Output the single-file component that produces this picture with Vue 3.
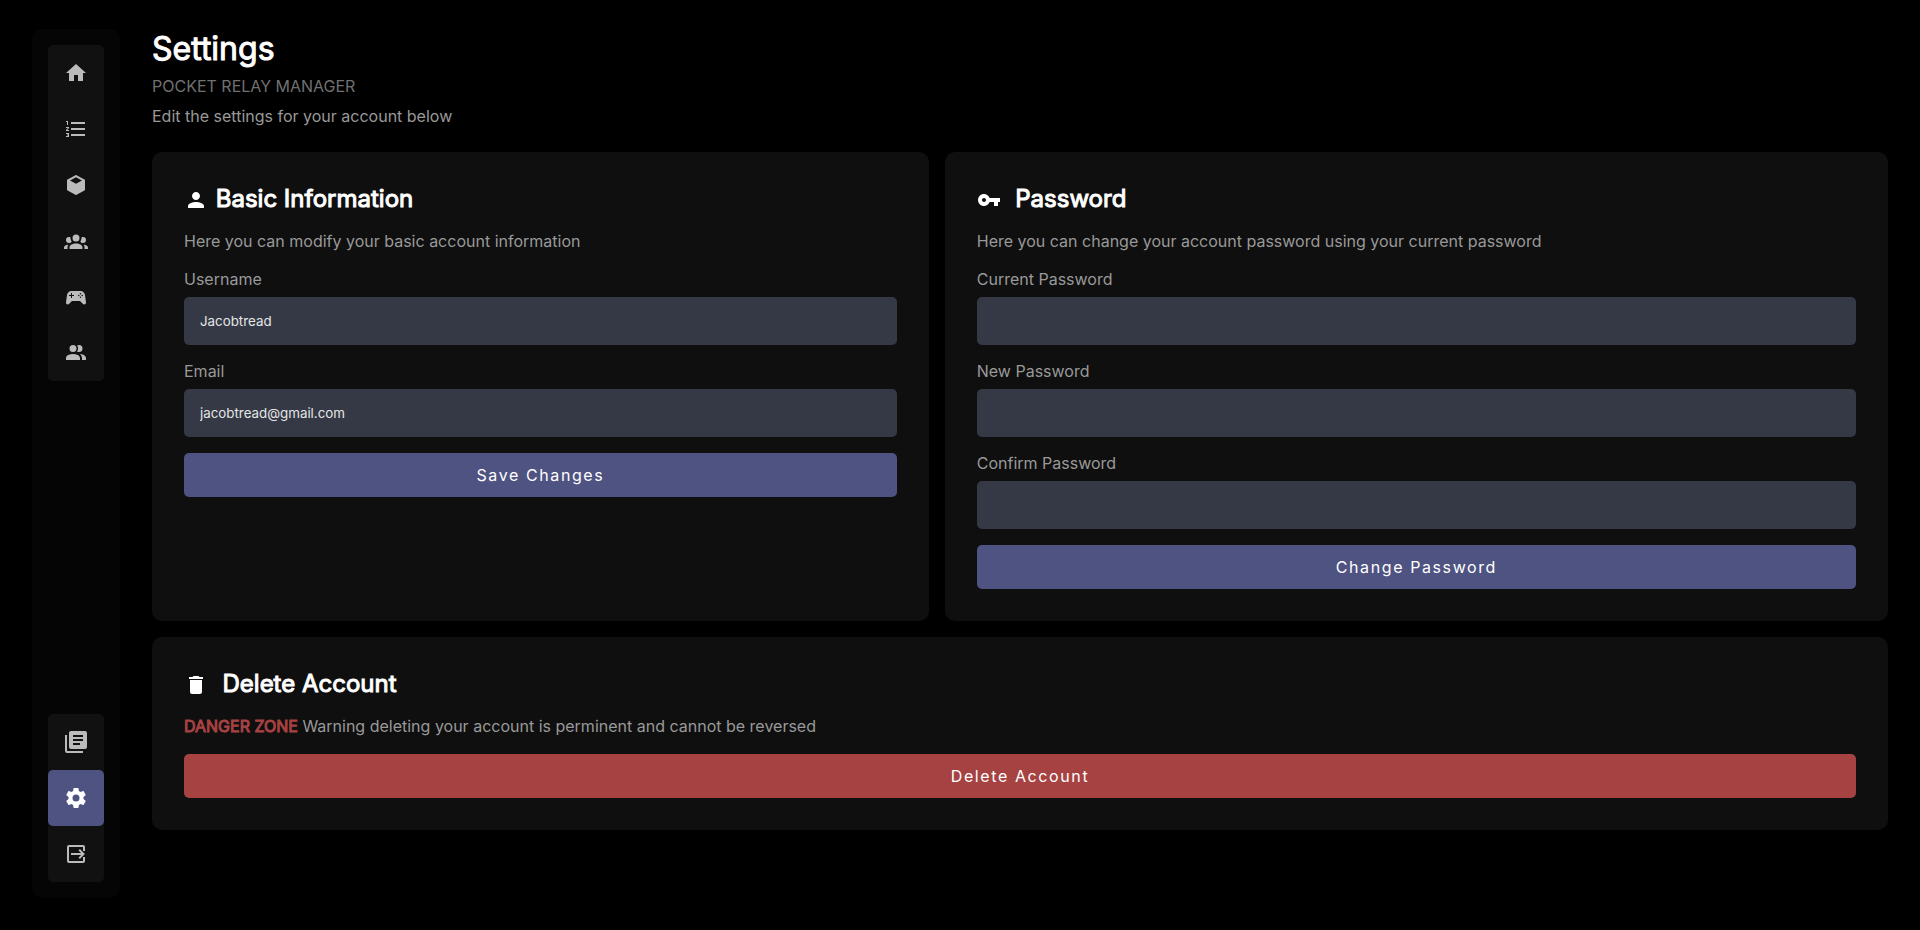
<script setup>
import { ref } from 'vue'

const mainLinks = [
  { label: 'Home', paths: ['M10 20v-6h4v6h5v-8h3L12 3 2 12h3v8z'] },
  { label: 'Leaderboards', paths: ['M2 17h2v.5H3v1h1v.5H2v1h3v-4H2v1zm1-9h1V4H2v1h1v3zm-1 3h1.800L2 13.100v.9h3v-1H3.200L5 10.900V10H2v1zm5-6v2h14V5H7zm0 14h14v-2H7v2zm0-6h14v-2H7v2z'] },
  { label: 'Inventory', paths: ['M21 16.5c0 .38-.21.71-.53.88l-7.900 4.440c-.16.12-.36.18-.57.18-.21 0-.41-.06-.57-.18l-7.900-4.440A.991.991 0 0 1 3 16.500v-9c0-.38.21-.71.53-.88l7.900-4.440c.16-.12.36-.18.57-.18.21 0 .41.06.57.18l7.900 4.440c.32.17.53.5.53.88v9M12 4.150 6.040 7.500 12 10.850l5.960-3.350L12 4.150z'] },
  { label: 'Players', paths: ['M12 5.5A3.5 3.5 0 0 1 15.5 9 3.5 3.5 0 0 1 12 12.5 3.5 3.5 0 0 1 8.5 9 3.5 3.5 0 0 1 12 5.5M5 8c.56 0 1.080.15 1.530.42-.15 1.430.27 2.850 1.130 3.960C7.160 13.340 6.160 14 5 14a3 3 0 0 1 0-6m14 0a3 3 0 0 1 0 6c-1.160 0-2.160-.66-2.660-1.620.86-1.110 1.280-2.530 1.130-3.960C17.920 8.150 18.440 8 19 8M5.500 18.250c0-2.070 2.910-3.750 6.500-3.750s6.500 1.680 6.500 3.750V20h-13v-1.750M0 20v-1.500c0-1.390 1.890-2.560 4.450-2.900-.59.68-.95 1.620-.95 2.650V20H0m24 0h-3.500v-1.750c0-1.030-.36-1.970-.95-2.650 2.560.34 4.450 1.510 4.450 2.900V20z'] },
  { label: 'Games', paths: ['M7.97 16L5 19c-.33.3-.77.5-1.250.5A1.750 1.750 0 0 1 2 17.750V17.500l1-7.380C3.210 7.810 5.140 6 7.500 6h9c2.360 0 4.290 1.810 4.500 4.120l1 7.380v.25a1.750 1.750 0 0 1-1.750 1.750c-.48 0-.92-.2-1.250-.5l-2.970-3H7.970M7 8v2H5v1h2v2h1v-2h2v-1H8V8H7m9.500 0a.75.75 0 0 0 0 1.500.75.75 0 0 0 0-1.500m-1.750 1.750a.75.75 0 0 0 0 1.500.75.75 0 0 0 0-1.500m3.500 0a.75.75 0 0 0 0 1.500.75.75 0 0 0 0-1.500m-1.750 1.750a.75.75 0 0 0 0 1.500.75.75 0 0 0 0-1.500z'] },
  { label: 'Accounts', paths: ['M16 17v2H2v-2s0-4 7-4 7 4 7 4m-3.500-9.500A3.500 3.500 0 1 0 9 11a3.500 3.500 0 0 0 3.500-3.500m3.440 5.500A5.320 5.320 0 0 1 18 17v2h4v-2s0-3.630-6.060-4M15 4a3.390 3.390 0 0 0-1.930.59 5 5 0 0 1 0 5.820A3.390 3.390 0 0 0 15 11a3.500 3.500 0 0 0 0-7z'] },
]

const footLinks = [
  { label: 'Logs', paths: ['M16 15H9v-2h7v2m3-4H9V9h10v2m0-4H9V5h10v2m2-6H7c-1.110 0-2 .89-2 2v14a2 2 0 0 0 2 2h14c1.110 0 2-.9 2-2V3a2 2 0 0 0-2-2M3 5v16h16v2H3a2 2 0 0 1-2-2V5h2z'] },
  { label: 'Settings', active: true, paths: ['M12 15.5A3.5 3.5 0 0 1 8.5 12 3.5 3.5 0 0 1 12 8.5a3.5 3.5 0 0 1 3.500 3.500 3.500 3.500 0 0 1-3.500 3.500m7.430-2.530c.04-.32.07-.64.07-.97 0-.33-.03-.66-.07-1l2.110-1.630c.19-.15.24-.42.12-.64l-2-3.460c-.12-.22-.39-.31-.61-.22l-2.490 1c-.52-.39-1.060-.73-1.690-.98l-.37-2.650A.506.506 0 0 0 14 2h-4c-.25 0-.46.18-.5.42l-.37 2.650c-.63.25-1.170.59-1.690.98l-2.490-1c-.22-.09-.49 0-.61.22l-2 3.460c-.13.22-.07.49.12.64L4.570 11c-.04.34-.07.67-.07 1 0 .33.03.65.07.97l-2.110 1.660c-.19.15-.25.42-.12.64l2 3.460c.12.22.39.3.61.22l2.490-1.010c.52.4 1.060.74 1.690.99l.37 2.650c.04.24.25.42.5.42h4c.25 0 .46-.18.5-.42l.37-2.650c.63-.26 1.170-.59 1.690-.99l2.490 1.010c.22.08.49 0 .61-.22l2-3.460c.12-.22.07-.49-.12-.64l-2.110-1.660z'] },
  { label: 'Logout', paths: ['M19 3H5a2 2 0 0 0-2 2v14a2 2 0 0 0 2 2h14a2 2 0 0 0 2-2v-4h-2v4H5V5h14v4h2V5a2 2 0 0 0-2-2z', 'M15.900 7L20.900 12l-5 5-1.410-1.410L17.080 13H7v-2h10.080l-2.590-2.590z'] },
]

const username = ref('Jacobtread')
const email = ref('jacobtread@gmail.com')
const currentPassword = ref('')
const newPassword = ref('')
const confirmPassword = ref('')
</script>

<template>
  <div class="app">
    <nav class="sidebar" aria-label="Main">
      <div v-for="(group, i) in [mainLinks, footLinks]" :key="i" class="nav-group">
        <a
          v-for="link in group"
          :key="link.label"
          href="#"
          class="nav-link"
          :class="{ active: link.active }"
          :aria-label="link.label"
        >
          <svg class="icon" viewBox="0 0 24 24" aria-hidden="true">
            <path v-for="d in link.paths" :key="d" :d="d" />
          </svg>
        </a>
      </div>
    </nav>

    <main class="content">
      <header class="page-header">
        <h1 class="page-title">Settings</h1>
        <p class="page-subtitle">POCKET RELAY MANAGER</p>
        <p class="text">Edit the settings for your account below</p>
      </header>

      <div class="cards">
        <form class="card" @submit.prevent>
          <h2 class="card-title">
            <svg class="icon" viewBox="0 0 24 24" aria-hidden="true"><path d="M12 12c2.210 0 4-1.790 4-4s-1.790-4-4-4-4 1.790-4 4 1.790 4 4 4zm0 2c-2.670 0-8 1.340-8 4v2h16v-2c0-2.660-5.330-4-8-4z" /></svg>
            Basic Information
          </h2>
          <p class="text">Here you can modify your basic account information</p>
          <div class="field">
            <label class="label" for="username">Username</label>
            <input id="username" v-model="username" class="input" type="text">
          </div>
          <div class="field">
            <label class="label" for="email">Email</label>
            <input id="email" v-model="email" class="input" type="email">
          </div>
          <button class="button" type="submit">Save Changes</button>
        </form>

        <form class="card" @submit.prevent>
          <h2 class="card-title">
            <svg class="icon" viewBox="0 0 24 24" aria-hidden="true"><path d="M12.650 10C11.830 7.670 9.610 6 7 6c-3.310 0-6 2.690-6 6s2.690 6 6 6c2.610 0 4.830-1.670 5.650-4H17v4h4v-4h2v-4H12.650zM7 14c-1.100 0-2-.9-2-2s.9-2 2-2 2 .9 2 2-.9 2-2 2z" /></svg>
            &nbsp;Password
          </h2>
          <p class="text">Here you can change your account password using your current password</p>
          <div class="field">
            <label class="label" for="current-password">Current Password</label>
            <input id="current-password" v-model="currentPassword" class="input" type="password">
          </div>
          <div class="field">
            <label class="label" for="new-password">New Password</label>
            <input id="new-password" v-model="newPassword" class="input" type="password">
          </div>
          <div class="field">
            <label class="label" for="confirm-password">Confirm Password</label>
            <input id="confirm-password" v-model="confirmPassword" class="input" type="password">
          </div>
          <button class="button" type="submit">Change Password</button>
        </form>
      </div>

      <section class="card">
        <h2 class="card-title">
          <svg class="icon" viewBox="0 0 24 24" aria-hidden="true"><path d="M6 19c0 1.100.9 2 2 2h8c1.100 0 2-.9 2-2V7H6v12zM19 4h-3.500l-1-1h-5l-1 1H5v2h14V4z" /></svg>
          &nbsp;Delete Account
        </h2>
        <p class="text"><span class="danger">DANGER ZONE</span> Warning deleting your account is perminent and cannot be reversed</p>
        <button class="button button-danger" type="button">Delete Account</button>
      </section>
    </main>
  </div>
</template>

<style>
body {
  margin: 0;
  background: #000;
}
</style>

<style scoped>
.app {
  box-sizing: border-box;
  display: flex;
  gap: 32px;
  min-height: 100vh;
  padding: 29px 32px 32px;
  font-family: Inter, "Liberation Sans", sans-serif;
  font-size: 16px;
  color: #999;
}

.sidebar {
  display: flex;
  flex-direction: column;
  justify-content: space-between;
  padding: 16px;
  border-radius: 10px;
  background: #050505;
}

.nav-group {
  border-radius: 5px;
  background: #111;
}

.nav-link {
  display: flex;
  align-items: center;
  justify-content: center;
  width: 56px;
  height: 56px;
  border-radius: 5px;
  color: #bbb;
}

.nav-link.active {
  background: #4f5382;
  color: #fff;
}

.icon {
  width: 24px;
  height: 24px;
  fill: currentColor;
}

.content {
  flex: 1;
  min-width: 0;
}

.page-header {
  margin-bottom: 24px;
}

h1,
h2,
p {
  margin: 0;
}

.page-title,
.card-title {
  font-weight: 400;
  color: #fff;
  -webkit-text-stroke: 1px #fff;
}

.page-title {
  margin-bottom: 8px;
  font-size: 32px;
  line-height: 39px;
}

.page-subtitle {
  margin-bottom: 8px;
  line-height: 20px;
  color: #707070;
}

.text {
  line-height: 24px;
}

.cards {
  display: grid;
  grid-template-columns: 14fr 17fr;
  gap: 16px;
  margin-bottom: 16px;
}

.card {
  display: flex;
  flex-direction: column;
  gap: 16px;
  padding: 32px;
  border-radius: 10px;
  background: #0f0f0f;
}

.card-title {
  height: 29px;
  font-size: 24px;
  line-height: 29px;
}

.card-title .icon {
  margin-right: 1px;
  vertical-align: middle;
}

.field {
  display: flex;
  flex-direction: column;
  gap: 8px;
}

.label {
  line-height: 20px;
}

.input {
  box-sizing: border-box;
  width: 100%;
  height: 48px;
  padding: 16px;
  border: 0;
  border-radius: 5px;
  background: #343945;
  color: #e5e5e5;
  font-family: inherit;
}

.button {
  height: 44px;
  border: 0;
  border-radius: 5px;
  background: #4f5382;
  color: #fff;
  font-family: inherit;
  font-size: 16px;
  letter-spacing: 0.1em;
}

.button-danger {
  background: #a64242;
}

.danger {
  color: #a64242;
  -webkit-text-stroke: 1px #a64242;
}
</style>
